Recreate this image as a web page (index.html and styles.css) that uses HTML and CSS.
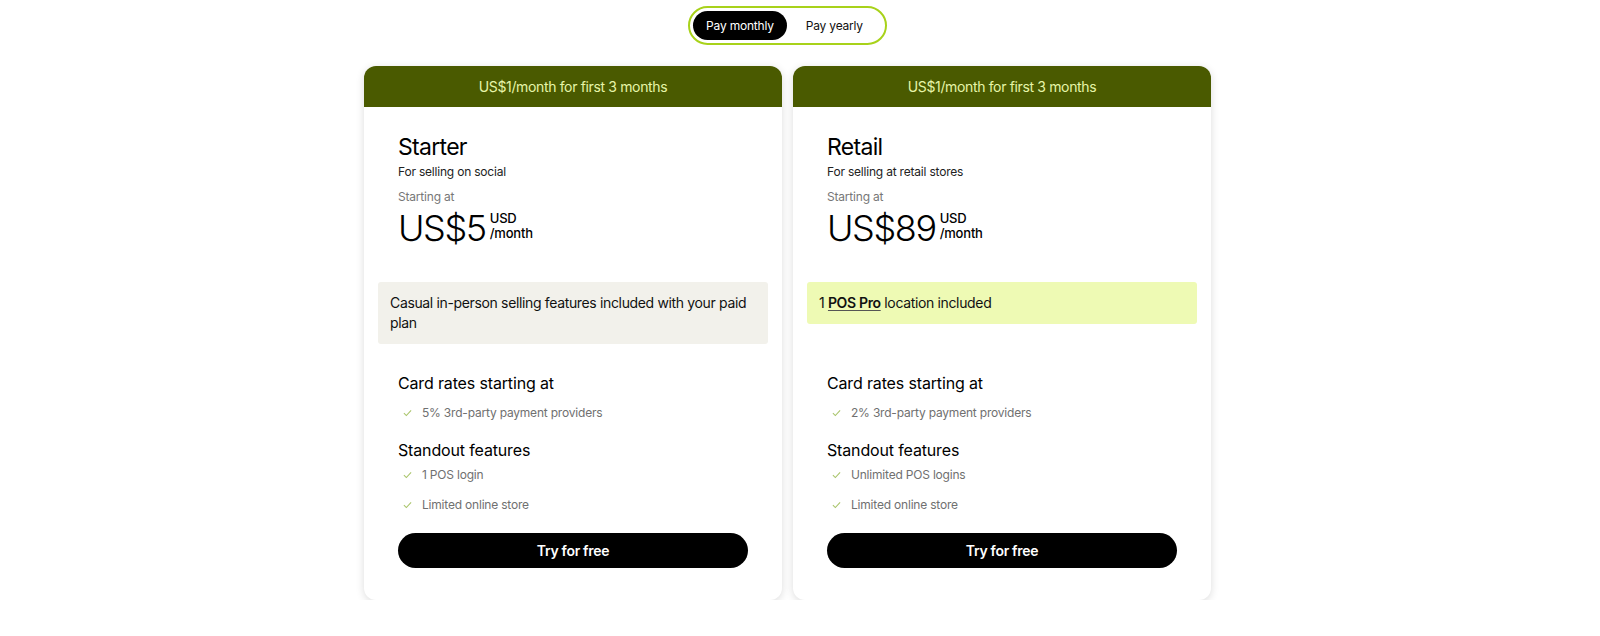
FILE: index.html
```html
<!DOCTYPE html>
<html lang="en">
<head>
<meta charset="utf-8">
<title>Pricing</title>
<link rel="stylesheet" href="styles.css">
</head>
<body>
<div class="page">
  <div class="toggle">
    <button class="opt active">Pay monthly</button>
    <button class="opt">Pay yearly</button>
  </div>
  <div class="cards">
    <div class="card">
      <div class="banner">US$1/month for first 3 months</div>
      <div class="body">
        <div class="intro">
          <h2 class="name">Starter</h2>
          <p class="desc">For selling on social</p>
          <p class="starting">Starting at</p>
          <div class="price"><span class="amount">US$5</span><span class="unit">USD<br>/month</span></div>
        </div>
        <div class="note-wrap"><div class="note grey">Casual in-person selling features included with your paid plan</div></div>
        <div class="features">
          <h3 class="fhead">Card rates starting at</h3>
          <ul class="list first">
            <li><svg class="check" viewBox="0 0 10 8"><path d="M1 4.2 3.7 6.8 9 1.2"/></svg>5% 3rd-party payment providers</li>
          </ul>
          <h3 class="fhead second">Standout features</h3>
          <ul class="list">
            <li><svg class="check" viewBox="0 0 10 8"><path d="M1 4.2 3.7 6.8 9 1.2"/></svg>1 POS login</li>
            <li><svg class="check" viewBox="0 0 10 8"><path d="M1 4.2 3.7 6.8 9 1.2"/></svg>Limited online store</li>
          </ul>
        </div>
        <button class="cta">Try for free</button>
      </div>
    </div>
    <div class="card">
      <div class="banner">US$1/month for first 3 months</div>
      <div class="body">
        <div class="intro">
          <h2 class="name">Retail</h2>
          <p class="desc">For selling at retail stores</p>
          <p class="starting">Starting at</p>
          <div class="price"><span class="amount">US$89</span><span class="unit">USD<br>/month</span></div>
        </div>
        <div class="note-wrap"><div class="note lime">1 <a class="link" href="#">POS Pro</a> location included</div></div>
        <div class="features">
          <h3 class="fhead">Card rates starting at</h3>
          <ul class="list first">
            <li><svg class="check" viewBox="0 0 10 8"><path d="M1 4.2 3.7 6.8 9 1.2"/></svg>2% 3rd-party payment providers</li>
          </ul>
          <h3 class="fhead second">Standout features</h3>
          <ul class="list">
            <li><svg class="check" viewBox="0 0 10 8"><path d="M1 4.2 3.7 6.8 9 1.2"/></svg>Unlimited POS logins</li>
            <li><svg class="check" viewBox="0 0 10 8"><path d="M1 4.2 3.7 6.8 9 1.2"/></svg>Limited online store</li>
          </ul>
        </div>
        <button class="cta">Try for free</button>
      </div>
    </div>
  </div>
</div>
</body>
</html>
```
FILE: styles.css
```css
* { box-sizing: border-box; }
html, body {
  margin: 0;
  padding: 0;
  background: #fff;
  overflow: hidden;
}
body {
  font-family: Inter, "Noto Sans", "Liberation Sans", sans-serif;
  color: #000;
}
.page {
  width: 1575px;
  display: flex;
  flex-direction: column;
  align-items: center;
  padding-top: 6px;
}
.toggle {
  display: flex;
  align-items: center;
  height: 39px;
  padding: 3px;
  border: 2px solid #a8d21a;
  border-radius: 20px;
  background: #fff;
}
.opt {
  font-family: inherit;
  font-size: 12px;
  letter-spacing: -0.2px;
  border: 0;
  background: transparent;
  color: #111;
  height: 29px;
  padding: 0 13px;
  border-radius: 15px;
  cursor: pointer;
}
.opt.active { background: #000; color: #fff; }
.opt + .opt { padding: 0 19px; }
.cards {
  display: flex;
  gap: 11px;
  margin-top: 21px;
}
.card {
  flex: 0 0 418px;
  width: 418px;
  border-radius: 12px;
  background: #fff;
  box-shadow: 0 2px 8px rgba(0,0,0,0.14);
  overflow: hidden;
}
.banner {
  height: 41px;
  background: #4a5a00;
  color: #e6f5a8;
  font-size: 14px;
  letter-spacing: -0.35px;
  display: flex;
  align-items: center;
  justify-content: center;
}
.body {
  padding: 26px 14px 32px;
}
.intro { padding: 0 20px; }
.name {
  margin: 0;
  font-size: 23px;
  font-weight: 400;
  line-height: 29px;
  letter-spacing: -0.7px;
}
.desc {
  margin: 2px 0 0;
  font-size: 12px;
  line-height: 16px;
  letter-spacing: -0.2px;
  color: #222;
}
.starting {
  margin: 9px 0 0;
  font-size: 12px;
  line-height: 16px;
  letter-spacing: -0.2px;
  color: #777;
}
.price {
  display: flex;
  align-items: flex-start;
  margin-top: 3px;
  height: 40px;
}
.amount {
  font-size: 36px;
  line-height: 40px;
  font-weight: 300;
  letter-spacing: -1.4px;
}
.unit {
  font-size: 13px;
  line-height: 15px;
  margin-left: 4px;
  margin-top: 3px;
  font-weight: 500;
  letter-spacing: -0.2px;
}
.note-wrap {
  height: 62px;
  margin-top: 34px;
}
.note {
  font-size: 14px;
  line-height: 20px;
  letter-spacing: -0.35px;
  padding: 11px 12px;
  border-radius: 3px;
  color: #111;
}
.note.grey { background: #f2f1eb; }
.note.lime { background: #eefab4; }
.link {
  color: #111;
  font-weight: 600;
  text-decoration: underline;
  text-underline-offset: 2px;
  text-decoration-color: #555;
}
.features {
  padding: 0 20px;
  margin-top: 29px;
}
.fhead {
  margin: 0;
  font-size: 16px;
  font-weight: 400;
  line-height: 20px;
  letter-spacing: -0.15px;
}
.fhead.second { margin-top: 12px; }
.list {
  list-style: none;
  margin: 0;
  padding: 0;
}
.list.first { margin-top: 5px; }
.list li {
  display: flex;
  align-items: center;
  font-size: 12px;
  line-height: 16px;
  letter-spacing: -0.2px;
  padding: 7px 0;
  color: #707070;
}
.check {
  width: 9px;
  height: 8px;
  margin: 0 10px 0 5px;
  fill: none;
  stroke: #a9c46a;
  stroke-width: 1.2;
}
.cta {
  display: block;
  width: calc(100% - 40px);
  margin: 13px 20px 0;
  height: 35px;
  border: 0;
  border-radius: 18px;
  background: #000;
  color: #fff;
  font-family: inherit;
  font-size: 14px;
  font-weight: 600;
  letter-spacing: -0.3px;
  cursor: pointer;
}
```
